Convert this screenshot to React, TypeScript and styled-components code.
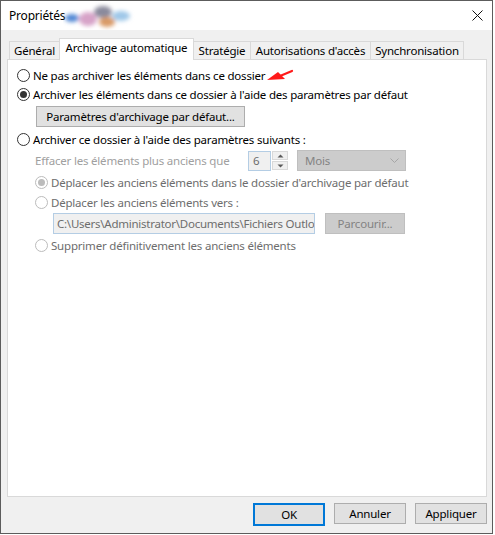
import React from 'react';
import styled, { createGlobalStyle } from 'styled-components';

const GlobalStyle = createGlobalStyle`
  html, body { margin: 0; padding: 0; background: #ffffff; }
  body {
    font-family: "Noto Sans", "Liberation Sans", sans-serif;
    font-size: 11.5px;
    letter-spacing: -0.2px;
    color: #000;
  }
  * { box-sizing: border-box; }
`;

const Window = styled.div`
  width: 493px;
  height: 534px;
  border: 1px solid #5c5c5c;
  background: #f0f0f0;
  display: flex;
  flex-direction: column;
`;

const TitleBar = styled.div`
  height: 29px;
  background: #ffffff;
  display: flex;
  align-items: center;
  padding-left: 8px;
  padding-right: 8px;
`;

const TitleText = styled.span`
  font-size: 12px;
  color: #000;
`;

const Redaction = styled.svg`
  margin-left: -2px;
  flex: none;
`;

const CloseButton = styled.div`
  margin-left: auto;
  width: 12px;
  height: 12px;
  display: flex;
  align-items: center;
  justify-content: center;
  margin-right: 1px;
`;

const Body = styled.div`
  flex: 1;
  display: flex;
  flex-direction: column;
  padding: 8px 5px 0 6px;
`;

const TabRow = styled.div`
  height: 21px;
  display: flex;
  align-items: flex-end;
  padding-left: 2px;
`;

const Tab = styled.div<{ $w: number; $active?: boolean }>`
  width: ${p => p.$w}px;
  height: ${p => (p.$active ? 22 : 18)}px;
  margin-bottom: ${p => (p.$active ? -1 : 0)}px;
  & + & { margin-left: -1px; }
  border: 1px solid #d9d9d9;
  border-bottom: none;
  background: ${p => (p.$active ? '#ffffff' : '#f0f0f0')};
  position: relative;
  z-index: ${p => (p.$active ? 2 : 1)};
  display: flex;
  justify-content: center;
  align-items: ${p => (p.$active ? 'flex-start' : 'center')};
  padding-top: ${p => (p.$active ? 1 : 0)}px;
  white-space: nowrap;
  color: #000;
`;

const Panel = styled.div`
  position: relative;
  width: 480px;
  height: 438px;
  border: 1px solid #d9d9d9;
  background: #ffffff;
  display: flex;
  flex-direction: column;
  padding: 6px 0 0 9px;
`;

const Row = styled.div<{ $mt?: number; $indent?: number; $h?: number }>`
  display: flex;
  align-items: center;
  height: ${p => p.$h ?? 19}px;
  margin-top: ${p => p.$mt ?? 0}px;
  padding-left: ${p => p.$indent ?? 0}px;
  white-space: nowrap;
`;

const RadioCircle = styled.span<{ $checked?: boolean; $disabled?: boolean }>`
  width: 13px;
  height: 13px;
  flex: none;
  border-radius: 50%;
  border: 1px solid ${p => (p.$disabled ? '#bcbcbc' : '#333333')};
  background: #ffffff;
  display: flex;
  align-items: center;
  justify-content: center;
  &::after {
    content: '';
    width: 7px;
    height: 7px;
    border-radius: 50%;
    background: ${p => (p.$disabled ? '#bcbcbc' : '#333333')};
    display: ${p => (p.$checked ? 'block' : 'none')};
  }
`;

const Label = styled.span<{ $tone?: 'normal' | 'disabled' | 'faint' }>`
  margin-left: 3px;
  color: ${p => (p.$tone === 'disabled' ? '#6d6d6d' : p.$tone === 'faint' ? '#a0a0a0' : '#000000')};
`;

const StaticLabel = styled.span`
  width: 213px;
  flex: none;
  color: #a0a0a0;
`;

const PushButton = styled.button<{ $w: number; $disabled?: boolean; $default?: boolean }>`
  width: ${p => p.$w}px;
  height: ${p => (p.$default ? 23 : 21)}px;
  flex: none;
  font: inherit;
  letter-spacing: inherit;
  padding: 0;
  background: ${p => (p.$disabled ? '#cccccc' : '#e1e1e1')};
  border: ${p => (p.$default ? '2px solid #0078d7' : `1px solid ${p.$disabled ? '#bfbfbf' : '#adadad'}`)};
  color: ${p => (p.$disabled ? '#838383' : '#000000')};
  display: flex;
  align-items: center;
  justify-content: center;
`;

const SpinInput = styled.div`
  width: 23px;
  height: 20px;
  border: 1px solid #b4cde4;
  background: #f0f0f0;
  color: #6d6d6d;
  padding-left: 4px;
  display: flex;
  align-items: center;
  flex: none;
`;

const SpinArrows = styled.div`
  width: 16px;
  height: 19px;
  margin-left: 1px;
  display: flex;
  flex-direction: column;
  gap: 1px;
  flex: none;
`;

const SpinHalf = styled.div`
  flex: 1;
  border: 1px solid #d9d9d9;
  background: #f0f0f0;
  display: flex;
  align-items: center;
  justify-content: center;
`;

const Combo = styled.div`
  width: 109px;
  height: 21px;
  margin-left: 9px;
  flex: none;
  background: #cccccc;
  border: 1px solid #bfbfbf;
  color: #838383;
  display: flex;
  align-items: center;
  padding: 0 6px 0 7px;
  justify-content: space-between;
`;

const PathInput = styled.div`
  width: 262px;
  height: 21px;
  flex: none;
  border: 1px solid #b4cde4;
  background: #f0f0f0;
  color: #6d6d6d;
  padding-left: 3px;
  letter-spacing: -0.25px;
  display: flex;
  align-items: center;
  overflow: hidden;
  white-space: nowrap;
`;

const Arrow = styled.svg`
  position: absolute;
  left: 258px;
  top: 8px;
`;

const ButtonBar = styled.div`
  display: flex;
  justify-content: flex-end;
  gap: 9px;
  margin-top: 6px;
`;

const Spacer = styled.span<{ $w: number }>`
  width: ${p => p.$w}px;
  flex: none;
`;

export default function App() {
  return (
    <>
      <GlobalStyle />
      <Window>
        <TitleBar>
          <TitleText>Propriétés</TitleText>
          <Redaction width="72" height="28" viewBox="0 0 72 28">
            <defs>
              <filter id="blur" x="-30%" y="-60%" width="160%" height="220%">
                <feGaussianBlur stdDeviation="2.2" />
              </filter>
            </defs>
            <g filter="url(#blur)">
              <ellipse cx="9" cy="16" rx="7" ry="4" fill="#4f86d4" />
              <ellipse cx="25" cy="17" rx="9" ry="7" fill="#d7a3c8" />
              <ellipse cx="40" cy="10" rx="9" ry="6" fill="#8a8a9c" />
              <ellipse cx="44" cy="20" rx="8" ry="5" fill="#d99a66" />
              <ellipse cx="58" cy="14" rx="9" ry="5" fill="#9fc7e8" />
            </g>
          </Redaction>
          <CloseButton>
            <svg width="11" height="11" viewBox="0 0 11 11">
              <path d="M0.5 0.5 L10.5 10.5 M10.5 0.5 L0.5 10.5" stroke="#111" strokeWidth="1" />
            </svg>
          </CloseButton>
        </TitleBar>
        <Body>
          <TabRow>
            <Tab $w={51}>Général</Tab>
            <Tab $w={135} $active>Archivage automatique</Tab>
            <Tab $w={58}>Stratégie</Tab>
            <Tab $w={121}>Autorisations d'accès</Tab>
            <Tab $w={94}>Synchronisation</Tab>
          </TabRow>
          <Panel>
            <Row>
              <RadioCircle />
              <Label>Ne pas archiver les éléments dans ce dossier</Label>
            </Row>
            <Row>
              <RadioCircle $checked />
              <Label>Archiver les éléments dans ce dossier à l'aide des paramètres par défaut</Label>
            </Row>
            <Row $mt={2} $h={21} $indent={19}>
              <PushButton $w={209}>Paramètres d'archivage par défaut...</PushButton>
            </Row>
            <Row $mt={3}>
              <RadioCircle />
              <Label>Archiver ce dossier à l'aide des paramètres suivants :</Label>
            </Row>
            <Row $mt={1} $h={21} $indent={18}>
              <StaticLabel>Effacer les éléments plus anciens que</StaticLabel>
              <SpinInput>6</SpinInput>
              <SpinArrows>
                <SpinHalf>
                  <svg width="7" height="4" viewBox="0 0 7 4"><path d="M0.5 3.5 L3.5 0.5 L6.5 3.5 Z" fill="#5a5a5a" /></svg>
                </SpinHalf>
                <SpinHalf>
                  <svg width="7" height="4" viewBox="0 0 7 4"><path d="M0.5 0.5 L3.5 3.5 L6.5 0.5 Z" fill="#5a5a5a" /></svg>
                </SpinHalf>
              </SpinArrows>
              <Combo>
                <span>Mois</span>
                <svg width="9" height="5" viewBox="0 0 9 5"><path d="M0.5 0.5 L4.5 4.5 L8.5 0.5" stroke="#a6a6a6" fill="none" strokeWidth="1" /></svg>
              </Combo>
            </Row>
            <Row $mt={2} $indent={18}>
              <RadioCircle $checked $disabled />
              <Label $tone="disabled">Déplacer les anciens éléments dans le dossier d'archivage par défaut</Label>
            </Row>
            <Row $mt={1} $indent={18}>
              <RadioCircle $disabled />
              <Label $tone="disabled">Déplacer les anciens éléments vers :</Label>
            </Row>
            <Row $mt={1} $h={21} $indent={36}>
              <PathInput>C:\Users\Administrator\Documents\Fichiers Outlo</PathInput>
              <Spacer $w={10} />
              <PushButton $w={80} $disabled>Parcourir...</PushButton>
            </Row>
            <Row $mt={2} $indent={18}>
              <RadioCircle $disabled />
              <Label $tone="disabled">Supprimer définitivement les anciens éléments</Label>
            </Row>
            <Arrow width="28" height="14" viewBox="0 0 28 14">
              <path d="M1 12 L12 4 L19 11 Z" fill="#ff1a1a" />
              <path d="M14 8 L26 3" stroke="#ff1a1a" strokeWidth="2.2" strokeLinecap="round" />
            </Arrow>
          </Panel>
          <ButtonBar>
            <PushButton $w={72} $default>OK</PushButton>
            <PushButton $w={72}>Annuler</PushButton>
            <PushButton $w={72}>Appliquer</PushButton>
          </ButtonBar>
        </Body>
      </Window>
    </>
  );
}
